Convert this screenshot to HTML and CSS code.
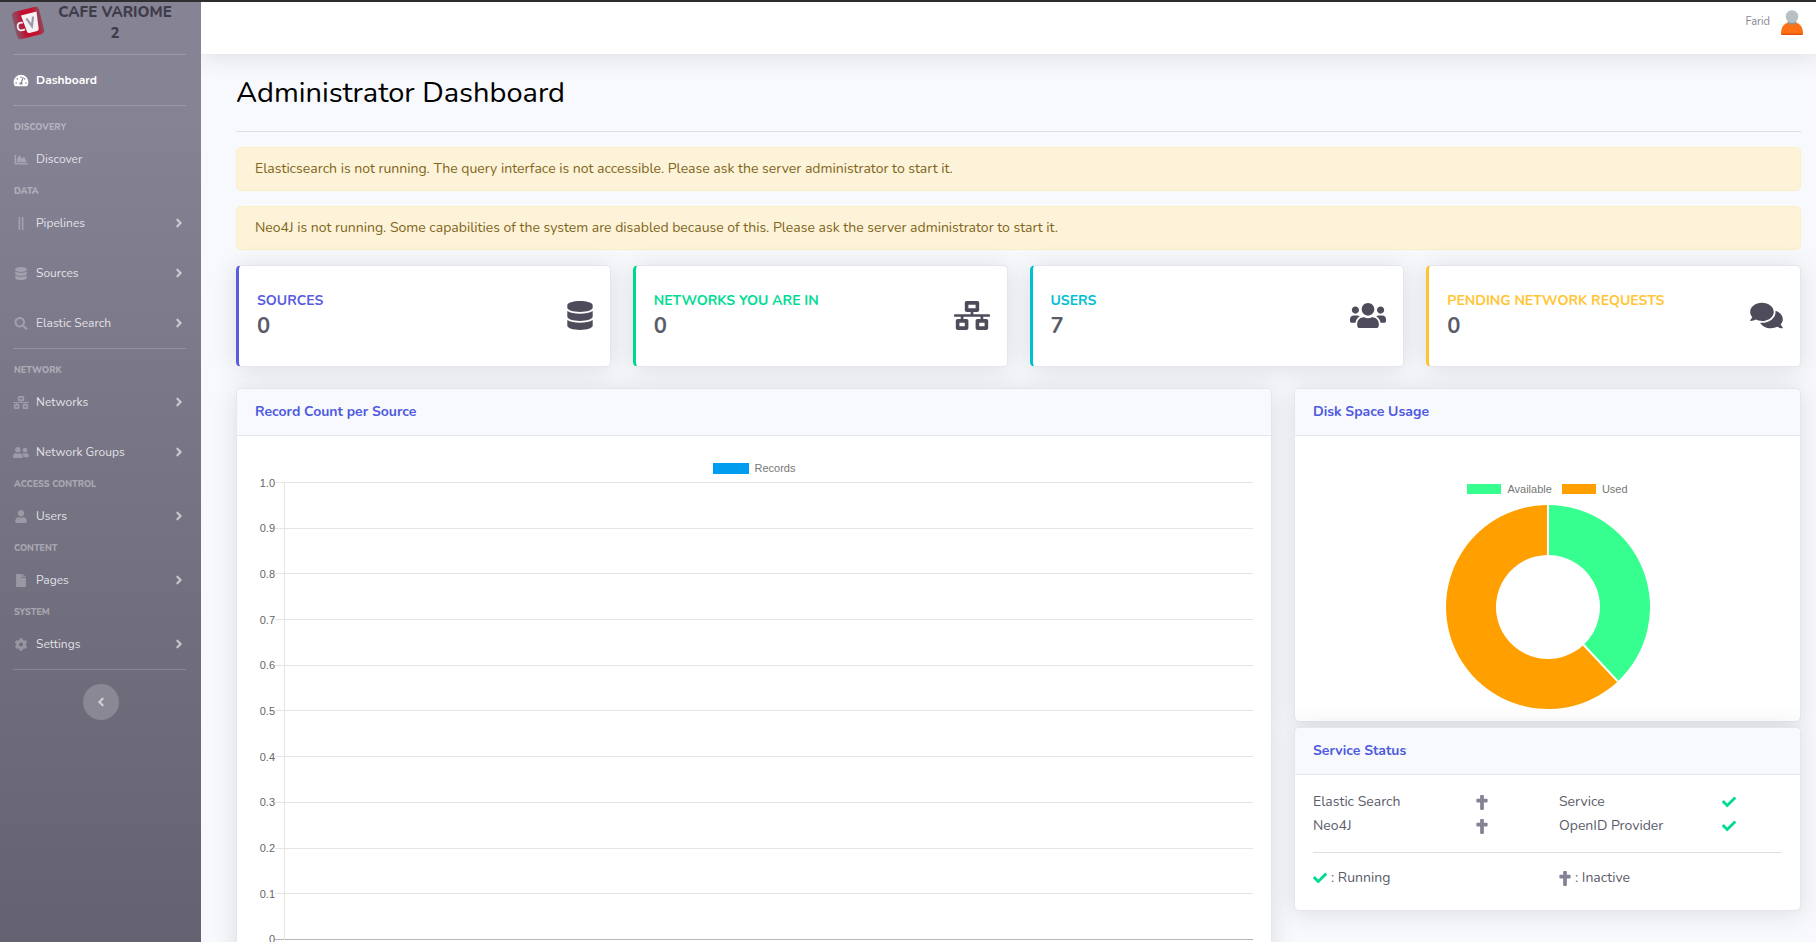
FILE: index.html
```html
<!DOCTYPE html>
<html lang="en">
<head>
<meta charset="utf-8">
<title>Cafe Variome 2 - Administrator Dashboard</title>
<meta name="viewport" content="width=device-width, initial-scale=1">
<link rel="stylesheet" href="styles.css">
</head>
<body>
<svg class="sprite" aria-hidden="true">
  <symbol id="i-db" viewBox="0 0 448 512"><path d="M448 73.143v45.714C448 159.143 347.667 192 224 192S0 159.143 0 118.857V73.143C0 32.857 100.333 0 224 0s224 32.857 224 73.143zM448 176v102.857C448 319.143 347.667 352 224 352S0 319.143 0 278.857V176c48.125 33.143 136.208 48.572 224 48.572S399.874 209.143 448 176zm0 160v102.857C448 479.143 347.667 512 224 512S0 479.143 0 438.857V336c48.125 33.143 136.208 48.572 224 48.572S399.874 369.143 448 336z"/></symbol>
  <symbol id="i-right" viewBox="0 0 256 512"><path d="M224.3 273l-136 136c-9.4 9.4-24.6 9.4-33.9 0l-22.6-22.6c-9.4-9.4-9.4-24.6 0-33.9l96.4-96.4-96.4-96.4c-9.4-9.4-9.4-24.6 0-33.9L54.3 103c9.4-9.4 24.6-9.4 33.9 0l136 136c9.5 9.4 9.5 24.6.1 34z"/></symbol>
  <symbol id="i-left" viewBox="0 0 256 512"><path d="M31.7 239l136-136c9.4-9.4 24.6-9.4 33.9 0l22.6 22.6c9.4 9.4 9.4 24.6 0 33.9L127.9 256l96.4 96.4c9.4 9.4 9.4 24.6 0 33.9L201.700 409c-9.4 9.4-24.6 9.4-33.9 0l-136-136c-9.5-9.4-9.5-24.6-.1-34z"/></symbol>
  <symbol id="i-check" viewBox="0 0 512 512"><path d="M173.898 439.404l-166.4-166.4c-9.997-9.997-9.997-26.206 0-36.204l36.203-36.204c9.997-9.998 26.207-9.998 36.204 0L192 312.69 432.095 72.596c9.997-9.997 26.207-9.997 36.204 0l36.203 36.204c9.997 9.997 9.997 26.206 0 36.204l-294.4 294.401c-9.998 9.997-26.207 9.997-36.204-.001z"/></symbol>
  <symbol id="i-cross" viewBox="0 0 384 512"><path d="M352 128h-96V32c0-17.67-14.33-32-32-32h-64c-17.67 0-32 14.33-32 32v96H32c-17.67 0-32 14.33-32 32v64c0 17.67 14.33 32 32 32h96v224c0 17.67 14.33 32 32 32h64c17.67 0 32-14.33 32-32V256h96c17.67 0 32-14.33 32-32v-64c0-17.67-14.33-32-32-32z"/></symbol>
  <symbol id="i-search" viewBox="0 0 512 512"><path d="M505 442.7L405.3 343c-4.5-4.5-10.6-7-17-7H372c27.6-35.3 44-79.7 44-128C416 93.1 322.9 0 208 0S0 93.1 0 208s93.1 208 208 208c48.3 0 92.7-16.4 128-44v16.3c0 6.4 2.5 12.5 7 17l99.7 99.7c9.4 9.4 24.6 9.4 33.9 0l28.3-28.3c9.4-9.4 9.4-24.6.1-34zM208 336c-70.7 0-128-57.2-128-128 0-70.7 57.2-128 128-128 70.7 0 128 57.2 128 128 0 70.7-57.2 128-128 128z"/></symbol>
  <symbol id="i-user" viewBox="0 0 448 512"><path d="M224 256c70.7 0 128-57.3 128-128S294.7 0 224 0 96 57.3 96 128s57.3 128 128 128zm89.6 32h-16.7c-22.2 10.2-46.9 16-72.9 16s-50.6-5.8-72.9-16h-16.7C60.2 288 0 348.2 0 422.4V464c0 26.5 21.5 48 48 48h352c26.5 0 48-21.5 48-48v-41.6c0-74.2-60.2-134.4-134.4-134.4z"/></symbol>
  <symbol id="i-file" viewBox="0 0 384 512"><path d="M224 136V0H24C10.7 0 0 10.7 0 24v464c0 13.3 10.7 24 24 24h336c13.3 0 24-10.7 24-24V160H248c-13.2 0-24-10.8-24-24zm160-14.1v6.1H256V0h6.1c6.4 0 12.5 2.5 17 7l97.9 98c4.5 4.5 7 10.6 7 16.9z"/></symbol>
  <symbol id="i-friends" viewBox="0 0 640 512"><path d="M192 256c61.9 0 112-50.1 112-112S253.9 32 192 32 80 82.1 80 144s50.1 112 112 112zm76.8 32h-8.3c-20.8 10-43.9 16-68.5 16s-47.6-6-68.5-16h-8.3C51.6 288 0 339.6 0 403.2V432c0 26.5 21.5 48 48 48h288c26.5 0 48-21.5 48-48v-28.8c0-63.6-51.6-115.2-115.2-115.2zM480 256c53 0 96-43 96-96s-43-96-96-96-96 43-96 96 43 96 96 96zm48 32h-3.8c-13.9 4.8-28.6 8-44.2 8s-30.3-3.2-44.2-8H432c-20.4 0-39.2 5.9-55.7 15.4 24.4 26.3 39.7 61.2 39.7 99.8v38.4c0 2.2-.5 4.3-.6 6.4H592c26.5 0 48-21.5 48-48 0-61.9-50.1-112-112-112z"/></symbol>
  <symbol id="i-users" viewBox="0 0 640 512"><path d="M96 224c35.3 0 64-28.7 64-64s-28.7-64-64-64-64 28.7-64 64 28.7 64 64 64zm448 0c35.3 0 64-28.7 64-64s-28.7-64-64-64-64 28.7-64 64 28.7 64 64 64zm32 32h-64c-17.6 0-33.5 7.1-45.1 18.6 40.3 22.1 68.9 62 75.1 109.4h66c17.7 0 32-14.3 32-32v-32c0-35.3-28.7-64-64-64zm-256 0c61.9 0 112-50.1 112-112S381.9 32 320 32 208 82.1 208 144s50.1 112 112 112zm76.8 32h-8.3c-20.8 10-43.9 16-68.5 16s-47.6-6-68.5-16h-8.3C179.6 288 128 339.6 128 403.2V432c0 26.5 21.5 48 48 48h288c26.5 0 48-21.5 48-48v-28.8c0-63.6-51.6-115.2-115.2-115.2zm-223.7-13.4C161.5 263.1 145.6 256 128 256H64c-35.3 0-64 28.7-64 64v32c0 17.7 14.3 32 32 32h65.9c6.3-47.4 34.9-87.3 75.2-109.4z"/></symbol>
  <symbol id="i-comments" viewBox="0 0 576 512"><path d="M416 192c0-88.4-93.1-160-208-160S0 103.6 0 192c0 34.3 14.1 65.9 38 92-13.4 30.2-35.5 54.2-35.8 54.5-2.2 2.3-2.8 5.7-1.5 8.7S4.8 352 8 352c36.6 0 66.9-12.3 88.7-25 32.2 15.7 70.3 25 111.3 25 114.9 0 208-71.6 208-160zm122 220c23.9-26 38-57.7 38-92 0-66.9-53.5-124.2-129.3-148.1.9 6.6 1.3 13.3 1.3 20.1 0 105.9-107.7 192-240 192-10.8 0-21.3-.8-31.7-1.9C207.8 439.6 281.8 480 368 480c41 0 79.1-9.2 111.3-25 21.8 12.7 52.1 25 88.7 25 3.2 0 6.1-1.9 7.3-4.8 1.3-2.9.7-6.3-1.5-8.7-.3-.3-22.4-24.2-35.8-54.5z"/></symbol>
  <symbol id="i-net" viewBox="0 0 640 512"><path d="M640 264v-16c0-8.84-7.16-16-16-16H344v-40h72c17.67 0 32-14.33 32-32V32c0-17.67-14.33-32-32-32H224c-17.67 0-32 14.33-32 32v128c0 17.67 14.33 32 32 32h72v40H16c-8.84 0-16 7.16-16 16v16c0 8.84 7.16 16 16 16h104v40H64c-17.67 0-32 14.33-32 32v128c0 17.67 14.33 32 32 32h160c17.67 0 32-14.33 32-32V352c0-17.67-14.33-32-32-32h-56v-40h304v40h-56c-17.67 0-32 14.33-32 32v128c0 17.67 14.33 32 32 32h160c17.67 0 32-14.33 32-32V352c0-17.67-14.33-32-32-32h-56v-40h104c8.84 0 16-7.16 16-16zM256 128V64h128v64H256zm-64 320H96v-64h96v64zm352 0h-96v-64h96v64z"/></symbol>
  <symbol id="i-tacho" viewBox="0 0 576 512"><path d="M288 32C128.94 32 0 160.94 0 320c0 52.8 14.25 102.26 39.06 144.8 5.61 9.62 16.3 15.2 27.44 15.2h443c11.14 0 21.83-5.58 27.44-15.2C561.75 422.26 576 372.8 576 320c0-159.06-128.94-288-288-288zm0 64c14.71 0 26.58 10.13 30.32 23.65-1.11 2.26-2.64 4.23-3.45 6.67l-9.22 27.67c-5.13 3.49-10.97 6.01-17.64 6.01-17.67 0-32-14.33-32-32S270.33 96 288 96zM96 384c-17.67 0-32-14.33-32-32s14.33-32 32-32 32 14.33 32 32-14.33 32-32 32zm48-160c-17.67 0-32-14.33-32-32s14.33-32 32-32 32 14.33 32 32-14.33 32-32 32zm246.77-72.41l-61.33 184C343.13 347.33 352 364.54 352 384c0 11.72-3.38 22.55-8.88 32H232.88c-5.5-9.45-8.88-20.28-8.88-32 0-33.94 26.5-61.43 59.9-63.59l61.34-184.01c4.17-12.56 17.73-19.45 30.36-15.17 12.57 4.19 19.35 17.79 15.17 30.36zm14.66 57.2l15.52-46.55c3.47-1.29 7.13-2.23 11.05-2.23 17.67 0 32 14.33 32 32s-14.33 32-32 32c-11.38-.01-20.89-6.28-26.57-15.22zM480 384c-17.67 0-32-14.33-32-32s14.33-32 32-32 32 14.33 32 32-14.33 32-32 32z"/></symbol>
  <symbol id="i-area" viewBox="0 0 512 512"><path d="M500 384c6.6 0 12 5.4 12 12v40c0 6.6-5.4 12-12 12H12c-6.6 0-12-5.4-12-12V76c0-6.6 5.4-12 12-12h40c6.6 0 12 5.4 12 12v308h436zM372.7 159.5L288 216l-85.3-113.7c-5.1-6.8-15.5-6.3-19.9 1L96 248v104h384l-89.9-187.8c-3.2-6.5-11.4-8.7-17.4-4.7z"/></symbol>
  <symbol id="i-grip" viewBox="0 0 256 512"><path d="M96 496V16c0-8.8-7.2-16-16-16H48c-8.8 0-16 7.2-16 16v480c0 8.8 7.2 16 16 16h32c8.8 0 16-7.2 16-16zm128 0V16c0-8.8-7.2-16-16-16h-32c-8.8 0-16 7.2-16 16v480c0 8.8 7.2 16 16 16h32c8.8 0 16-7.2 16-16z"/></symbol>
  <symbol id="i-cog" viewBox="0 0 512 512"><path d="M487.4 315.7l-42.6-24.6c4.3-23.2 4.3-47 0-70.2l42.6-24.6c4.9-2.8 7.1-8.6 5.5-14-11.1-35.6-30-67.8-54.7-94.6-3.8-4.1-10-5.1-14.8-2.3L380.8 110c-17.9-15.4-38.5-27.3-60.8-35.1V25.8c0-5.6-3.9-10.5-9.4-11.7-36.7-8.2-74.3-7.8-109.2 0-5.5 1.2-9.4 6.1-9.4 11.7V75c-22.2 7.9-42.8 19.8-60.8 35.1L88.7 85.5c-4.9-2.8-11-1.9-14.8 2.3-24.7 26.7-43.6 58.9-54.7 94.6-1.7 5.4.6 11.2 5.5 14L67.3 221c-4.3 23.2-4.3 47 0 70.2l-42.6 24.6c-4.9 2.8-7.1 8.6-5.5 14 11.1 35.6 30 67.8 54.7 94.6 3.8 4.1 10 5.1 14.8 2.3l42.6-24.6c17.9 15.4 38.5 27.3 60.8 35.1v49.2c0 5.6 3.9 10.5 9.4 11.7 36.7 8.2 74.3 7.8 109.2 0 5.5-1.2 9.4-6.1 9.4-11.7v-49.2c22.2-7.9 42.8-19.8 60.8-35.1l42.6 24.6c4.9 2.8 11 1.9 14.8-2.3 24.7-26.7 43.6-58.9 54.7-94.6 1.5-5.5-.7-11.3-5.6-14.1zM256 336c-44.1 0-80-35.9-80-80s35.9-80 80-80 80 35.9 80 80-35.9 80-80 80z"/></symbol>
</svg>

<div class="wrapper">
  <nav class="sidebar" aria-label="Main">
    <a class="brand" href="#">
      <svg class="brand-logo" viewBox="0 0 34 34" aria-hidden="true">
        <defs><linearGradient id="mug" x1="0" x2="1"><stop offset="0" stop-color="#86596a"/><stop offset=".35" stop-color="#c00f30"/><stop offset=".75" stop-color="#c8102e"/><stop offset="1" stop-color="#8a4c5c"/></linearGradient></defs>
        <g transform="rotate(-14 17 17)">
          <rect x="3" y="3" width="28" height="28" rx="4" fill="url(#mug)"/>
          <path d="M12 8h16l-2 17q-.3 2-2 2h-8q-1.800 0-2.100-2z" fill="#f4f2f4"/>
          <path d="M12 15.500q-5.500-2-6 3t6.500 4" fill="none" stroke="#f4f2f4" stroke-width="1.800"/>
          <path d="M16.500 12l3.500 9 3.500-9" fill="none" stroke="#9b9ba3" stroke-width="2.200"/>
        </g>
      </svg>
      <span class="brand-text">Cafe Variome 2</span>
    </a>
    <hr>
    <a class="link active" href="#"><svg class="ico"><use href="#i-tacho"/></svg>Dashboard</a>
    <hr>
    <h6 class="group">Discovery</h6>
    <a class="link" href="#"><svg class="ico"><use href="#i-area"/></svg>Discover</a>
    <h6 class="group">Data</h6>
    <a class="link" href="#"><svg class="ico"><use href="#i-grip"/></svg>Pipelines<svg class="arrow"><use href="#i-right"/></svg></a>
    <a class="link" href="#"><svg class="ico"><use href="#i-db"/></svg>Sources<svg class="arrow"><use href="#i-right"/></svg></a>
    <a class="link" href="#"><svg class="ico"><use href="#i-search"/></svg>Elastic Search<svg class="arrow"><use href="#i-right"/></svg></a>
    <hr>
    <h6 class="group">Network</h6>
    <a class="link" href="#"><svg class="ico"><use href="#i-net"/></svg>Networks<svg class="arrow"><use href="#i-right"/></svg></a>
    <a class="link" href="#"><svg class="ico"><use href="#i-friends"/></svg>Network Groups<svg class="arrow"><use href="#i-right"/></svg></a>
    <h6 class="group">Access Control</h6>
    <a class="link" href="#"><svg class="ico"><use href="#i-user"/></svg>Users<svg class="arrow"><use href="#i-right"/></svg></a>
    <h6 class="group">Content</h6>
    <a class="link" href="#"><svg class="ico"><use href="#i-file"/></svg>Pages<svg class="arrow"><use href="#i-right"/></svg></a>
    <h6 class="group">System</h6>
    <a class="link" href="#"><svg class="ico"><use href="#i-cog"/></svg>Settings<svg class="arrow"><use href="#i-right"/></svg></a>
    <hr>
    <button class="toggle" type="button" aria-label="Collapse sidebar"><svg class="arrow"><use href="#i-left"/></svg></button>
  </nav>

  <div class="content">
    <header class="topbar">
      <a class="profile" href="#"><span>Farid</span>
        <svg class="avatar" viewBox="0 0 22 26" aria-hidden="true"><path d="M0 23.500C0 16 4 12 11 12s11 4 11 11.500q0 1.500-1.500 1.500h-19Q0 25 0 23.500z" fill="#fd7014"/><path d="M.3 23.500h21.400q-.2 1.500-1.200 1.500h-19Q.5 25 .3 23.500z" fill="#e2500c"/><path d="M6.500 12.500q4.500 4.500 9 0l-1-2.500h-7z" fill="#8f979a"/><circle cx="11" cy="6.500" r="6.300" fill="#b8c0c4"/></svg>
      </a>
    </header>
    <main class="main">
      <h1>Administrator Dashboard</h1>
      <hr class="rule">
      <div class="alert" role="alert">Elasticsearch is not running. The query interface is not accessible. Please ask the server administrator to start it.</div>
      <div class="alert" role="alert">Neo4J is not running. Some capabilities of the system are disabled because of this. Please ask the server administrator to start it.</div>

      <section class="stats">
        <div class="card stat primary"><div><div class="label">Sources</div><div class="value">0</div></div><svg class="w26"><use href="#i-db"/></svg></div>
        <div class="card stat success"><div><div class="label">Networks you are in</div><div class="value">0</div></div><svg class="w36"><use href="#i-net"/></svg></div>
        <div class="card stat info"><div><div class="label">Users</div><div class="value">7</div></div><svg class="w36"><use href="#i-users"/></svg></div>
        <div class="card stat warning"><div><div class="label">Pending Network Requests</div><div class="value">0</div></div><svg class="w33"><use href="#i-comments"/></svg></div>
      </section>

      <section class="panels">
        <div class="card">
          <h2 class="card-header">Record Count per Source</h2>
          <div class="chart">
            <div class="legend"><span class="key"><i class="swatch blue"></i>Records</span></div>
            <div class="plot">
              <div class="tick"><span>1.0</span></div>
              <div class="tick"><span>0.9</span></div>
              <div class="tick"><span>0.8</span></div>
              <div class="tick"><span>0.7</span></div>
              <div class="tick"><span>0.6</span></div>
              <div class="tick"><span>0.5</span></div>
              <div class="tick"><span>0.4</span></div>
              <div class="tick"><span>0.3</span></div>
              <div class="tick"><span>0.2</span></div>
              <div class="tick"><span>0.1</span></div>
              <div class="tick zero"><span>0</span></div>
            </div>
          </div>
        </div>
        <div class="side">
          <div class="card">
            <h2 class="card-header">Disk Space Usage</h2>
            <div class="disk">
              <div class="legend"><span class="key"><i class="swatch green"></i>Available</span><span class="key"><i class="swatch orange"></i>Used</span></div>
              <svg class="donut" viewBox="-102 -102 204 204" role="img" aria-label="Disk space: 38% available, 62% used">
                <path d="M0-102A102 102 0 0 1 69.800 74.400L35.600 37.900A52 52 0 0 0 0-52z" fill="#36ff8f"/>
                <path d="M69.800 74.400A102 102 0 1 1 0-102V-52A52 52 0 1 0 35.600 37.900z" fill="#ffa000"/>
                <path d="M0-102V-51M69.800 74.400L35 37.300" stroke="#fff" stroke-width="2"/>
              </svg>
            </div>
          </div>
          <div class="card">
            <h2 class="card-header">Service Status</h2>
            <div class="status">
              <div class="status-grid">
                <span>Elastic Search</span><svg class="cross"><use href="#i-cross"/></svg>
                <span>Service</span><svg class="check"><use href="#i-check"/></svg>
                <span>Neo4J</span><svg class="cross"><use href="#i-cross"/></svg>
                <span>OpenID Provider</span><svg class="check"><use href="#i-check"/></svg>
              </div>
              <hr class="rule">
              <div class="key-grid">
                <span class="mark"><svg class="check"><use href="#i-check"/></svg>: Running</span>
                <span class="mark"><svg class="cross"><use href="#i-cross"/></svg>: Inactive</span>
              </div>
            </div>
          </div>
        </div>
      </section>
    </main>
  </div>
</div>
</body>
</html>
```

FILE: styles.css
```css
* { box-sizing: border-box; }

body {
  margin: 0;
  border-top: 2px solid #2e2e2e;
  background: #f8f9fc;
  color: #5a5c69;
  font-family: Nunito, Lato, "Open Sans", sans-serif;
  font-size: 14px;
  line-height: 22px;
}

a { color: inherit; text-decoration: none; }
svg { fill: currentColor; flex: none; }
h1, h2, h6 { margin: 0; }
.sprite { display: none; }

.wrapper { display: flex; min-height: calc(100vh - 2px); }

/* Sidebar */
.sidebar {
  position: relative;
  z-index: 1;
  flex: none;
  width: 201px;
  background: linear-gradient(180deg, #858394 10%, #625f6e 100%);
  color: rgba(255, 255, 255, .8);
}
.sidebar hr {
  height: 1px;
  margin: 0 15px 0 13px;
  border: 0;
  background: rgba(255, 255, 255, .18);
}
.sidebar hr + .group { margin-top: 14px; }

.brand {
  display: flex;
  align-items: center;
  height: 52px;
  padding: 0 28px 10px 11px;
  gap: 12px;
  color: #3f3c4a;
}
.brand-logo { width: 34px; height: 34px; }
.brand-text {
  flex: 1;
  font-size: 15px;
  font-weight: 800;
  line-height: 21px;
  text-align: center;
  text-transform: uppercase;
}

.link {
  display: flex;
  align-items: center;
  height: 50px;
  padding: 0 18px 0 13px;
  font-size: 12px;
}
.link.active { color: #fff; font-weight: 700; }
.ico { width: 16px; height: 13px; margin-right: 7px; opacity: .35; }
.active .ico { opacity: 1; }
.arrow { width: 8px; height: 14px; }
.link .arrow { margin-left: auto; opacity: .75; }

.group {
  height: 14px;
  padding-left: 14px;
  color: rgba(255, 255, 255, .4);
  font-size: 9px;
  font-weight: 800;
  line-height: 14px;
  text-transform: uppercase;
}

.toggle {
  display: flex;
  align-items: center;
  justify-content: center;
  width: 36px;
  height: 36px;
  margin: 14px auto;
  padding: 0;
  border: 0;
  border-radius: 50%;
  background: rgba(255, 255, 255, .2);
  color: rgba(255, 255, 255, .6);
}

/* Top bar */
.content { flex: 1; min-width: 0; }
.topbar {
  display: flex;
  justify-content: flex-end;
  height: 52px;
  padding: 8px 13px 0 0;
  background: #fff;
  box-shadow: 0 2px 25px rgba(58, 59, 69, .15);
}
.profile {
  display: flex;
  gap: 11px;
  height: 26px;
  color: #858796;
  font-size: 11px;
  line-height: 24px;
}
.avatar { width: 22px; height: 26px; }

/* Main area */
.main { padding: 21px 15px 22px 35px; }
h1 {
  color: #000;
  font-size: 29px;
  font-weight: 400;
  line-height: 36px;
}
.rule {
  height: 1px;
  margin: 20px 0 15px;
  border: 0;
  background: #dddfe6;
}
.alert {
  margin-bottom: 15px;
  padding: 10px 18px;
  border: 1px solid #fdefc5;
  border-radius: 5px;
  background: #fdf3d8;
  color: #806520;
}

.card {
  border: 1px solid #e3e6f0;
  border-radius: 5px;
  background: #fff;
  box-shadow: 0 2px 25px rgba(58, 59, 69, .15);
}
.card-header {
  padding: 12px 18px;
  border-bottom: 1px solid #e3e6f0;
  border-radius: 5px 5px 0 0;
  background: #f8f9fc;
  color: #4e5adf;
  font-size: 14px;
  font-weight: 700;
  line-height: 22px;
}

.stats {
  display: grid;
  grid-template-columns: repeat(4, 1fr);
  gap: 22px;
  margin-bottom: 21px;
}
.stat {
  display: flex;
  align-items: center;
  justify-content: space-between;
  height: 102px;
  padding: 0 17px 2px 18px;
  border-left: 3px solid;
  color: #4e4c5a;
}
.stat svg { height: 29px; }
.w26 { width: 26px; }
.w33 { width: 33px; }
.w36 { width: 36px; }
.label {
  font-weight: 700;
  line-height: 22px;
  text-transform: uppercase;
}
.value {
  color: #5a5c69;
  font-size: 22px;
  font-weight: 700;
  line-height: 29px;
}
.primary { border-left-color: #5a5ce0; }
.primary .label { color: #5a5ce0; }
.success { border-left-color: #00d68f; }
.success .label { color: #00dc94; }
.info { border-left-color: #00bfcf; }
.info .label { color: #00bfcf; }
.warning { border-left-color: #ffc233; }
.warning .label { color: #ffc535; }

.panels {
  display: grid;
  grid-template-columns: minmax(0, 1036fr) minmax(0, 507fr);
  gap: 22px;
}
.side { display: flex; flex-direction: column; gap: 5px; }

/* Charts */
.legend {
  display: flex;
  justify-content: center;
  gap: 10px;
  color: #777;
  font: 11px/14px "Liberation Sans", Arial, sans-serif;
}
.key { display: flex; align-items: center; gap: 6px; }
.swatch { width: 34px; height: 10px; }
.blue { width: 36px; height: 11px; background: #009cf0; }
.green { background: #36ff8f; }
.orange { background: #ffa000; }

.chart { padding: 25px 18px 36px; }
.plot {
  position: relative;
  display: flex;
  flex-direction: column;
  justify-content: space-between;
  height: 458px;
  margin-top: 7px;
}
.plot::before {
  content: "";
  position: absolute;
  top: 0;
  bottom: 0;
  left: 29px;
  width: 1px;
  background: #e5e5e5;
}
.tick {
  display: flex;
  align-items: center;
  height: 1px;
  color: #666;
  font: 11px/12px "Liberation Sans", Arial, sans-serif;
}
.tick span { width: 20px; text-align: right; }
.tick::after {
  content: "";
  flex: 1;
  height: 1px;
  background: #e5e5e5;
}
.zero::after { background: #b5b5b5; }

.disk { padding: 46px 18px 12px; }
.donut { display: block; width: 204px; height: 204px; margin: 9px auto 0; }

/* Service status */
.status { padding: 15px 18px 20px; }
.status .rule { margin: 14px 0 13px; }
.status-grid {
  display: grid;
  grid-template-columns: 163px 83px 163px 1fr;
  align-items: center;
  grid-auto-rows: 24px;
}
.key-grid { display: grid; grid-template-columns: 246px 1fr; line-height: 24px; }
.mark { display: flex; align-items: center; gap: 4px; }
.check { width: 14px; height: 14px; color: #00dc8f; }
.cross { width: 12px; height: 15px; color: #858296; }
```
